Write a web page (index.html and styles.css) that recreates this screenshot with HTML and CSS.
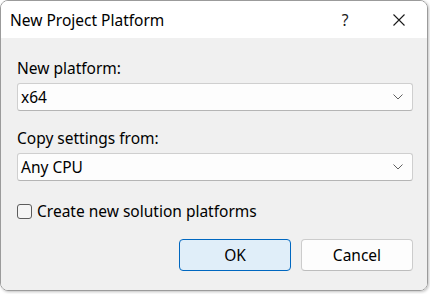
FILE: index.html
```html
<!DOCTYPE html>
<html>
<head>
<meta charset="utf-8">
<link rel="stylesheet" href="styles.css">
</head>
<body>
<div class="window">
  <div class="titlebar">
    <span class="title">New Project Platform</span>
    <span class="help">?</span>
    <span class="close"><svg width="12" height="12" viewBox="0 0 12 12"><path d="M0.5 0.5L11.5 11.5M11.5 0.5L0.5 11.5" stroke="#1a1a1a" stroke-width="1.1" fill="none"/></svg></span>
  </div>
  <div class="content">
    <div class="label">New platform:</div>
    <div class="combo"><span>x64</span><svg class="chev" width="10" height="6" viewBox="0 0 10 6"><path d="M0.5 0.5L5 5L9.5 0.5" stroke="#606060" stroke-width="1" fill="none"/></svg></div>
    <div class="label second">Copy settings from:</div>
    <div class="combo"><span>Any CPU</span><svg class="chev" width="10" height="6" viewBox="0 0 10 6"><path d="M0.5 0.5L5 5L9.5 0.5" stroke="#606060" stroke-width="1" fill="none"/></svg></div>
    <div class="check-row"><span class="box"></span><span>Create new solution platforms</span></div>
    <div class="buttons">
      <div class="btn primary">OK</div>
      <div class="btn">Cancel</div>
    </div>
  </div>
</div>
</body>
</html>
```
FILE: styles.css
```css
html, body { margin: 0; padding: 0; }
body {
  width: 430px;
  height: 294px;
  background: #ffffff;
  font-family: "Noto Sans", "Open Sans", sans-serif;
  font-size: 15.5px;
  color: #000;
  overflow: hidden;
}
.window {
  width: 426px;
  height: 289px;
  border: 1px solid #9b9b9b;
  border-radius: 8px;
  overflow: hidden;
  display: flex;
  flex-direction: column;
  box-shadow: 1px 1px 3px rgba(0,0,0,0.25);
}
.titlebar {
  height: 37px;
  background: #ffffff;
  display: flex;
  align-items: center;
  flex-shrink: 0;
}
.title {
  padding-left: 9px;
  flex: 1;
  color: #000;
}
.help {
  width: 20px;
  text-align: center;
  margin-right: 38px;
  color: #1a1a1a;
}
.close {
  width: 12px;
  height: 12px;
  margin-right: 22px;
  display: flex;
}
.content {
  flex: 1;
  background: #f0f0f0;
  padding: 20px 14px 0 16px;
  display: flex;
  flex-direction: column;
}
.label {
  line-height: 20px;
  height: 20px;
}
.label.second { margin-top: 17px; }
.combo {
  margin-top: 5px;
  height: 26px;
  background: #fdfdfd;
  border: 1px solid #cfcfcf;
  border-bottom-color: #b5b5b5;
  border-radius: 3px;
  display: flex;
  align-items: center;
  padding: 0 9px 0 3px;
  line-height: 20px;
}
.combo span { flex: 1; }
.chev { display: block; }
.check-row {
  margin-top: 20px;
  height: 20px;
  line-height: 20px;
  display: flex;
  align-items: center;
  gap: 5px;
}
.box {
  width: 13px;
  height: 13px;
  border: 1px solid #5c5c5c;
  border-radius: 3px;
  background: #f5f5f5;
}
.buttons {
  margin-top: 18px;
  display: flex;
  justify-content: flex-end;
  gap: 10px;
}
.btn {
  width: 110px;
  height: 30px;
  border: 1px solid #cccccc;
  border-bottom-color: #bdbdbd;
  border-radius: 4px;
  background: #fdfdfd;
  display: flex;
  align-items: center;
  justify-content: center;
}
.btn.primary {
  background: #e0eef9;
  border-color: #0067c0;
}
```
